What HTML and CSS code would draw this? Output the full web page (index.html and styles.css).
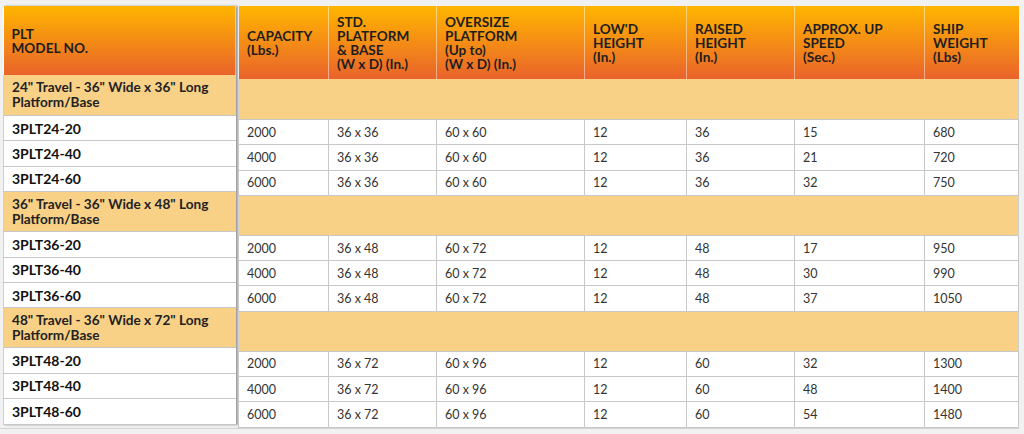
FILE: index.html
```html
<!DOCTYPE html>
<html>
<head>
<meta charset="utf-8">
<link rel="stylesheet" href="styles.css">
</head>
<body>
<div class="wrap">
  <table class="fixed">
    <thead>
      <tr><th class="hdr">PLT<br>MODEL NO.</th></tr>
    </thead>
    <tbody>
      <tr class="grp g1"><td>24" Travel - 36" Wide x 36" Long Platform/Base</td></tr>
      <tr class="mdl"><td>3PLT24-20</td></tr>
      <tr class="mdl"><td>3PLT24-40</td></tr>
      <tr class="mdl"><td>3PLT24-60</td></tr>
      <tr class="grp"><td>36" Travel - 36" Wide x 48" Long Platform/Base</td></tr>
      <tr class="mdl"><td>3PLT36-20</td></tr>
      <tr class="mdl"><td>3PLT36-40</td></tr>
      <tr class="mdl"><td>3PLT36-60</td></tr>
      <tr class="grp"><td>48" Travel - 36" Wide x 72" Long Platform/Base</td></tr>
      <tr class="mdl"><td>3PLT48-20</td></tr>
      <tr class="mdl"><td>3PLT48-40</td></tr>
      <tr class="mdl"><td>3PLT48-60</td></tr>
    </tbody>
  </table>
  <table class="data">
    <colgroup>
      <col class="c1"><col class="c2"><col class="c3"><col class="c4"><col class="c5"><col class="c6"><col class="c7">
    </colgroup>
    <thead>
      <tr class="hrow">
        <th>CAPACITY<br>(Lbs.)</th>
        <th>STD.<br>PLATFORM<br>&amp; BASE<br>(W x D) (In.)</th>
        <th>OVERSIZE<br>PLATFORM<br>(Up to)<br>(W x D) (In.)</th>
        <th>LOW'D<br>HEIGHT<br>(In.)</th>
        <th>RAISED<br>HEIGHT<br>(In.)</th>
        <th>APPROX. UP<br>SPEED<br>(Sec.)</th>
        <th>SHIP<br>WEIGHT<br>(Lbs)</th>
      </tr>
    </thead>
    <tbody>
      <tr class="grp g1"><td colspan="7"></td></tr>
      <tr class="row"><td>2000</td><td>36 x 36</td><td>60 x 60</td><td>12</td><td>36</td><td>15</td><td>680</td></tr>
      <tr class="row"><td>4000</td><td>36 x 36</td><td>60 x 60</td><td>12</td><td>36</td><td>21</td><td>720</td></tr>
      <tr class="row"><td>6000</td><td>36 x 36</td><td>60 x 60</td><td>12</td><td>36</td><td>32</td><td>750</td></tr>
      <tr class="grp"><td colspan="7"></td></tr>
      <tr class="row"><td>2000</td><td>36 x 48</td><td>60 x 72</td><td>12</td><td>48</td><td>17</td><td>950</td></tr>
      <tr class="row"><td>4000</td><td>36 x 48</td><td>60 x 72</td><td>12</td><td>48</td><td>30</td><td>990</td></tr>
      <tr class="row"><td>6000</td><td>36 x 48</td><td>60 x 72</td><td>12</td><td>48</td><td>37</td><td>1050</td></tr>
      <tr class="grp"><td colspan="7"></td></tr>
      <tr class="row"><td>2000</td><td>36 x 72</td><td>60 x 96</td><td>12</td><td>60</td><td>32</td><td>1300</td></tr>
      <tr class="row"><td>4000</td><td>36 x 72</td><td>60 x 96</td><td>12</td><td>60</td><td>48</td><td>1400</td></tr>
      <tr class="row"><td>6000</td><td>36 x 72</td><td>60 x 96</td><td>12</td><td>60</td><td>54</td><td>1480</td></tr>
    </tbody>
  </table>
</div>
</body>
</html>
```

FILE: styles.css
```css
html, body {
  margin: 0;
  padding: 0;
  background: #f1f1f1;
}
body {
  font-family: Lato, "Open Sans", sans-serif;
  color: #222;
}
.wrap {
  display: flex;
  align-items: flex-start;
  gap: 2px;
  padding: 6px 0 0 3px;
  width: 1016px;
  height: 422px;
  border-bottom: 1px solid #d4d4d4;
}
table {
  border-collapse: collapse;
  table-layout: fixed;
}
th {
  text-align: left;
  vertical-align: middle;
  font-weight: 700;
  font-size: 13.6px;
  line-height: 14px;
  color: #1e1e1e;
  background: linear-gradient(#ffb500, #e9632b);
  padding: 0 8px;
}
.fixed {
  width: 234px;
  box-shadow: 2px 0 2px rgba(0, 0, 0, 0.35);
  background: #fff;
}
.fixed .hdr {
  height: 69px;
  border-right: 1px solid rgba(255, 255, 255, 0.45);
}
.fixed td {
  padding: 0 8px;
  border-bottom: 1px solid #c8c8c8;
  border-left: 1px solid #d0d0d0;
}
.grp td {
  background: #f8d187;
  height: 39px;
  font-size: 13.6px;
  line-height: 15px;
  font-weight: 700;
  color: #222;
  vertical-align: middle;
}
.grp.g1 td {
  height: 40px;
}
.mdl td {
  height: 24.4px;
  font-size: 14px;
  font-weight: 700;
  color: #111;
  vertical-align: middle;
  background: #fff;
}
.data {
  width: 780px;
}
.c1 { width: 90px; }
.c2 { width: 108px; }
.c3 { width: 148px; }
.c4 { width: 102px; }
.c5 { width: 108px; }
.c6 { width: 130px; }
.c7 { width: 94px; }
.hrow th {
  height: 73px;
  border-left: 1px solid rgba(255, 255, 255, 0.45);
}
.data .grp td {
  padding: 0;
  height: 39px;
  border-left: 1px solid #d0d0d0;
  border-right: 1px solid #d0d0d0;
}
.data .grp.g1 td {
  height: 40px;
}
.row td {
  height: 24.3px;
  padding: 0 8px;
  font-size: 12.5px;
  color: #333;
  background: #fff;
  border: 1px solid #c8c8c8;
  vertical-align: middle;
}
```
